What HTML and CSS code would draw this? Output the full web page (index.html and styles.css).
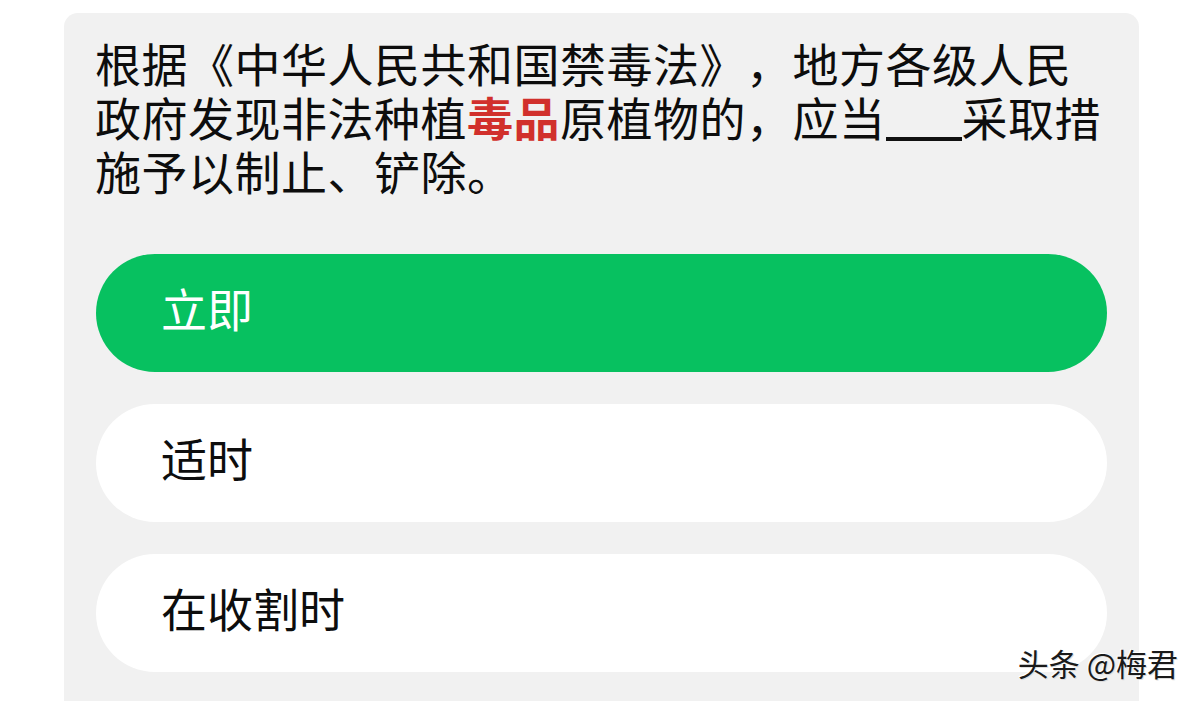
FILE: index.html
```html
<!DOCTYPE html>
<html lang="zh-CN">
<head>
<meta charset="utf-8">
<link rel="stylesheet" href="styles.css">
</head>
<body>
<div class="card">
  <p class="question">根据《中华人民共和国禁毒法》，地方各级人民政府发现非法种植<b class="hl">毒品</b>原植物的，应当<span class="blank"></span>采取措施予以制止、铲除。</p>
  <div class="options">
    <div class="option selected">立即</div>
    <div class="option">适时</div>
    <div class="option">在收割时</div>
  </div>
</div>
<div class="watermark">头条 @梅君</div>
</body>
</html>
```
FILE: styles.css
```css
html, body {
  margin: 0;
  padding: 0;
  background: #ffffff;
  font-family: "Noto Sans CJK SC", "Noto Sans", sans-serif;
}
body {
  position: relative;
  width: 1200px;
  height: 701px;
  overflow: hidden;
}
.card {
  margin: 13px 0 0 64px;
  width: 1075px;
  box-sizing: border-box;
  height: 720px;
  background: #f1f1f1;
  border-radius: 14px 14px 0 0;
  padding: 22px 32px 0 32px;
}
.question {
  margin: 0 0 0 -1px;
  font-size: 46px;
  line-height: 54px;
  letter-spacing: 0.5px;
  color: #0d0d0d;
  width: 1020px;
  text-spacing-trim: space-all;
  font-feature-settings: "fwid" 1;
}
.hl {
  color: #d1302c;
  font-weight: 700;
}
.blank {
  display: inline-block;
  width: 76px;
  height: 0;
  border-bottom: 4px solid #111;
  margin-bottom: -5px;
}
.options {
  margin-top: 57px;
  display: flex;
  flex-direction: column;
  gap: 32px;
}
.option {
  height: 118px;
  box-sizing: border-box;
  border-radius: 59px;
  background: #ffffff;
  color: #0d0d0d;
  font-size: 46px;
  display: flex;
  align-items: center;
  padding-left: 65px;
  padding-bottom: 12px;
}
.option.selected {
  background: #07c160;
  color: #ffffff;
}
.watermark {
  position: absolute;
  right: 22px;
  top: 640px;
  font-size: 31px;
  color: #1a1a1a;
  text-shadow: -1px -1px 0 #fff, 1px 1px 0 #ddd;
}
```
